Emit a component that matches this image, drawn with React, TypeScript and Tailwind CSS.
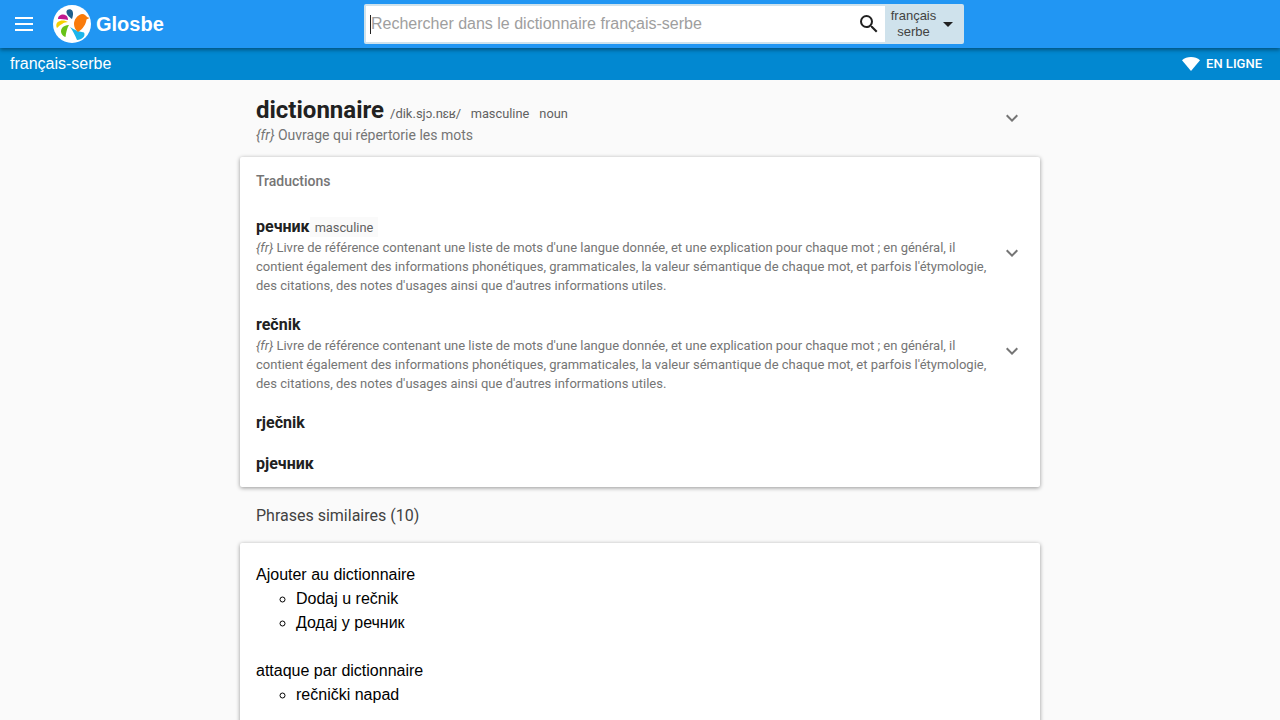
function Logo() {
  return (
    <svg width="38" height="38" viewBox="0 0 38 38">
      <circle cx="19" cy="19" r="19" fill="#fff" />
      <path d="M19 14 C16 12 13 9 13.5 6.5 C14 4 18 3.5 19.5 6 C20.5 8.5 20 11 19 14 Z" fill="#1f5f8b" />
      <path d="M15 15 C12 14 8 14.5 5 14 C5 10 10 8.5 13 10.5 C14.5 11.5 15 13 15 15 Z" fill="#c2188f" />
      <path d="M15 17 C11 17 7 20 4 23 C2.5 20 3.5 17 7 16 C10 15 13 16 15 17 Z" fill="#f5d000" />
      <path d="M16 20 C14 23 13 28 12.5 32 C9 31 7 27 8.5 24 C10 21 13 20 16 20 Z" fill="#66c217" />
      <path d="M17 22 C20 26 22 30 24 35 C29 35 33 31 31 27.5 C27 27 21 25 17 22 Z" fill="#1cb5ea" />
      <path d="M21 19 C21 15 24 10 29 9 C32 9 33 11 34 12 L36.5 13 L33.5 14.5 C33 19 30 24 25 27 C22.5 25 21 22 21 19 Z" fill="#f97b0b" />
    </svg>
  );
}

function Chevron({ className }: { className: string }) {
  return (
    <svg className={className} width="24" height="24" viewBox="0 0 24 24" fill="#757575">
      <path d="M16.59 8.59 12 13.17 7.41 8.59 6 10l6 6 6-6z" />
    </svg>
  );
}

function Entry({ word, tag, wrapClass }: { word: string; tag?: string; wrapClass: string }) {
  return (
    <div className={`flex items-center ${wrapClass}`}>
      <div className="flex-1">
        <div className="flex items-start h-[21px]">
          <span className="text-[16px] font-bold text-[#212121] leading-[20px]">{word}</span>
          {tag && <span className="h-[20px] px-[5px] bg-[#fafafa] text-[12.8px] text-[#616161] leading-[22px]">{tag}</span>}
        </div>
        <p className="text-[13px] leading-[19px] text-[#757575]">
          <i>{"{fr}"}</i> Livre de référence contenant une liste de mots d'une langue donnée, et une explication pour chaque mot ; en général, il
          contient également des informations phonétiques, grammaticales, la valeur sémantique de chaque mot, et parfois l'étymologie,
          des citations, des notes d'usages ainsi que d'autres informations utiles.
        </p>
      </div>
      <Chevron className="ml-[4px] mb-[6px] shrink-0" />
    </div>
  );
}

export default function App() {
  return (
    <div className="h-[720px] overflow-hidden bg-[#fafafa] font-['Roboto',sans-serif]">
      {/* Top bar */}
      <header className="relative z-10 h-[48px] bg-[#2196f3] flex items-center shadow-[0_2px_4px_rgba(0,0,0,0.4)]">
        <div className="w-[48px] flex flex-col items-center gap-[4px]">
          <span className="w-[18px] h-[2px] bg-white" />
          <span className="w-[18px] h-[2px] bg-white" />
          <span className="w-[18px] h-[2px] bg-white" />
        </div>
        <div className="ml-[5px]"><Logo /></div>
        <span className="ml-[5px] w-[268px] text-[20px] font-bold text-white font-['Liberation_Sans',sans-serif]">Glosbe</span>
        <div className="w-[600px] h-[40px] flex border-[2px] border-[#cfe2ec] rounded-[2px] bg-white font-['Liberation_Sans',sans-serif]">
          <div className="flex-1 flex items-center pl-[4px] text-[16px] text-[#9e9e9e]">
            <span className="w-px h-[19px] bg-[#212121]" />
            Rechercher dans le dictionnaire français-serbe
          </div>
          <div className="w-[28px] flex items-center">
            <svg width="24" height="24" viewBox="0 0 24 24" fill="#212121">
              <path d="M15.5 14h-.79l-.28-.27A6.47 6.47 0 0 0 16 9.5 6.5 6.5 0 1 0 9.5 16c1.61 0 3.09-.59 4.23-1.57l.27.28v.79l5 4.99L20.49 19l-4.99-5zm-6 0C7.01 14 5 11.99 5 9.5S7.01 5 9.5 5 14 7.01 14 9.5 11.99 14 9.5 14z" />
            </svg>
          </div>
          <div className="w-[77px] bg-[#cfe2ec] flex items-center text-[13px] leading-[16px] text-[#424242] pl-[4px]">
            <div className="w-[49px] text-center">français<br />serbe</div>
            <span className="ml-[5px] w-0 h-0 border-x-[5px] border-x-transparent border-t-[5px] border-t-[#212121]" />
          </div>
        </div>
      </header>

      {/* Language bar */}
      <div className="h-[32px] bg-[#0288d1] flex items-center justify-between pl-[10px] pr-[18px] text-white">
        <span className="text-[16px] font-['Liberation_Sans',sans-serif]">français-serbe</span>
        <div className="flex items-center gap-[6px]">
          <svg width="18" height="14" viewBox="0 0 18 14" fill="#fff"><path d="M9 14 0 3.2C2.4 1.2 5.5 0 9 0s6.6 1.2 9 3.2z" /></svg>
          <span className="text-[13px] font-medium">EN LIGNE</span>
        </div>
      </div>

      <main className="w-[800px] mx-auto">
        {/* Headword */}
        <div className="h-[77px] flex items-center px-[16px]">
          <div className="flex-1">
            <div className="flex items-baseline h-[28px] mb-[5px]">
              <span className="text-[24px] font-bold text-[#212121]">dictionnaire</span>
              <span className="ml-[6px] text-[13px] text-[#616161]">/dik.sjɔ.nɛʁ/</span>
              <span className="ml-[9.5px] text-[12.8px] text-[#616161]">masculine</span>
              <span className="ml-[10px] text-[12.8px] text-[#616161]">noun</span>
            </div>
            <p className="text-[14px] leading-[20px] text-[#757575]"><i>{"{fr}"}</i> Ouvrage qui répertorie les mots</p>
          </div>
          <Chevron className="shrink-0 mb-[2px]" />
        </div>

        {/* Translations */}
        <section className="h-[330px] bg-white rounded-[2px] shadow-[0_1px_4px_rgba(0,0,0,0.4)] px-[16px] pt-[16px]">
          <h2 className="text-[14px] leading-[16px] font-medium text-[#757575] mb-[28px]">Traductions</h2>
          <Entry word="речник" tag="masculine" wrapClass="mb-[20px]" />
          <Entry word="rečnik" wrapClass="mb-[20px]" />
          <div className="text-[16px] font-bold text-[#212121] leading-[20px] mb-[21px]">rječnik</div>
          <div className="text-[16px] font-bold text-[#212121] leading-[20px]">рјечник</div>
        </section>

        <h2 className="h-[56px] flex items-center px-[16px] pt-[2px] text-[16px] text-[#424242]">Phrases similaires (10)</h2>

        {/* Similar phrases */}
        <section className="bg-white rounded-[2px] shadow-[0_1px_4px_rgba(0,0,0,0.4)] px-[16px] py-[20px] text-[16px] leading-[24px] text-black font-['Liberation_Sans',sans-serif]">
          <div>Ajouter au dictionnaire</div>
          <ul className="list-[circle] pl-[40px] mb-[24px]">
            <li>Dodaj u rečnik</li>
            <li>Додај у речник</li>
          </ul>
          <div>attaque par dictionnaire</div>
          <ul className="list-[circle] pl-[40px]">
            <li>rečnički napad</li>
          </ul>
        </section>
      </main>
    </div>
  );
}
